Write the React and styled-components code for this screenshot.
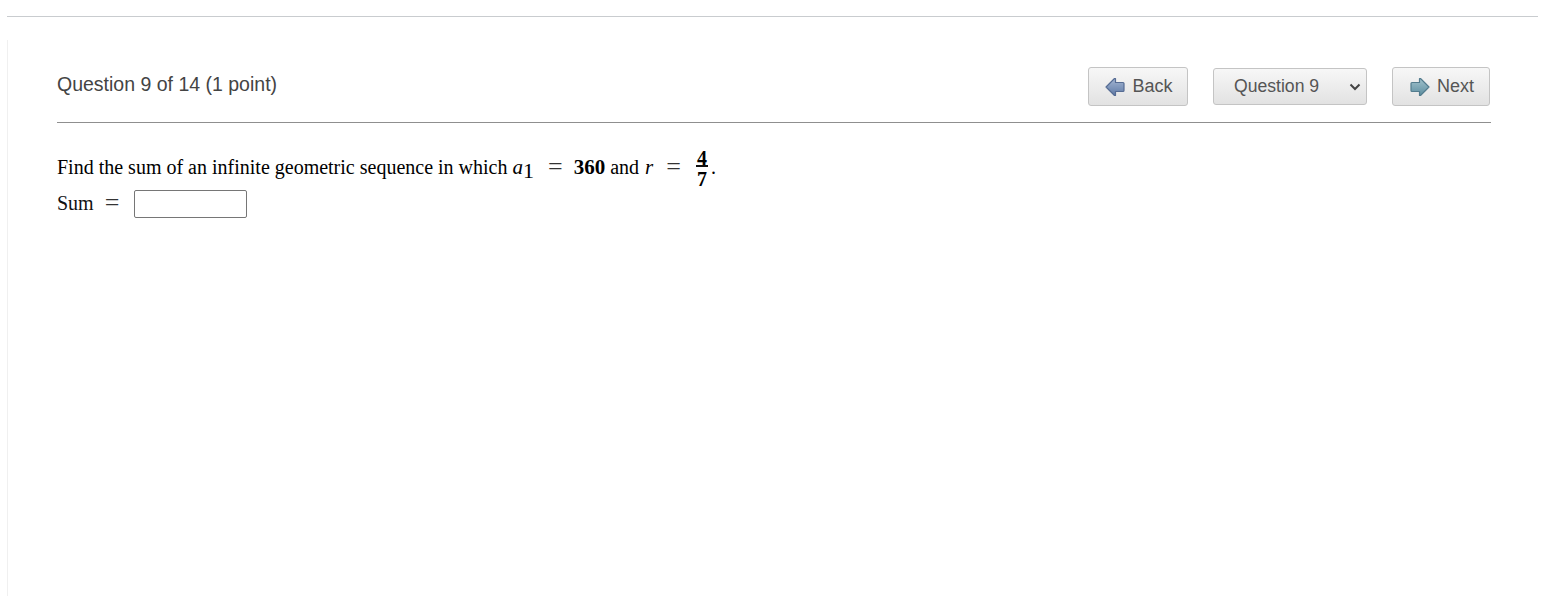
import styled, { createGlobalStyle } from 'styled-components';

const GlobalStyle = createGlobalStyle`
  html, body {
    margin: 0;
    padding: 0;
    background: #fff;
  }
  body {
    font-family: "Liberation Sans", Arial, sans-serif;
    overflow: hidden;
  }
`;

const ArrowIcon = ({ flip, from, to, edge, id }) => (
  <IconSvg $flip={flip} width="20" height="20" viewBox="0 0 20 20">
    <defs>
      <linearGradient id={id} x1="0" y1="0" x2="0" y2="1">
        <stop offset="0" stopColor={from} />
        <stop offset="1" stopColor={to} />
      </linearGradient>
    </defs>
    <path
      d="M1 10 L9.5 1.5 L10.5 1.5 L10.5 5.5 L18 5.5 Q19 5.5 19 6.5 L19 13.5 Q19 14.5 18 14.5 L10.5 14.5 L10.5 18.5 L9.5 18.5 Z"
      fill={`url(#${id})`}
      stroke={edge}
      strokeWidth="1.2"
      strokeLinejoin="round"
    />
  </IconSvg>
);

const App = () => (
  <Page>
    <GlobalStyle />
    <TopRule />
    <Panel>
      <Header>
        <Title>Question 9 of 14 (1 point)</Title>
        <Nav>
          <NavButton $width={100}>
            <ArrowIcon id="back" from="#a3b5d2" to="#5f7aa6" edge="#566c94" />
            Back
          </NavButton>
          <SelectBox>
            <span>Question 9</span>
            <svg width="12" height="8" viewBox="0 0 12 8">
              <path d="M1.5 1.5 L6 6 L10.5 1.5" fill="none" stroke="#444" strokeWidth="2" />
            </svg>
          </SelectBox>
          <NavButton $width={98}>
            <ArrowIcon id="next" flip from="#a2c2cc" to="#5d8ea0" edge="#537c8e" />
            Next
          </NavButton>
        </Nav>
      </Header>
      <Divider />
      <Prompt>
        Find the sum of an infinite geometric sequence in which
        <MathVar $left={5}>a</MathVar>
        <Sub>1</Sub>
        <Equals $left={14} $right={11}>=</Equals>
        <Bold>360</Bold>
        <Word>and</Word>
        <MathVar $left={6}>r</MathVar>
        <Equals $left={13} $right={15}>=</Equals>
        <Fraction>
          <Numerator>4</Numerator>
          <Denominator>7</Denominator>
        </Fraction>
        <Dot>.</Dot>
      </Prompt>
      <AnswerRow>
        <AnswerLabel>
          Sum
          <Equals $left={11} $right={15}>=</Equals>
        </AnswerLabel>
        <AnswerInput type="text" />
      </AnswerRow>
    </Panel>
  </Page>
);

const Page = styled.div`
  height: 596px;
  padding-top: 16px;
  box-sizing: border-box;
  overflow: hidden;
`;

const TopRule = styled.div`
  height: 1px;
  margin: 0 15px 0 7px;
  background: #c9cccf;
`;

const Panel = styled.div`
  margin: 23px 0 0 7px;
  height: 560px;
  padding: 27px 62px 0 49px;
  border-left: 1px solid #f0f0f0;
`;

const Header = styled.div`
  display: flex;
  justify-content: space-between;
  align-items: flex-start;
  height: 55px;
  padding-right: 1px;
`;

const Title = styled.div`
  font-size: 19.5px;
  line-height: 34px;
  color: #444;
`;

const Nav = styled.div`
  display: flex;
  align-items: center;
  gap: 25px;
`;

const NavButton = styled.button`
  display: flex;
  align-items: center;
  justify-content: center;
  gap: 9px;
  box-sizing: border-box;
  width: ${({ $width }) => $width}px;
  height: 39px;
  padding: 0;
  border: 1px solid #c4c4c4;
  border-radius: 3px;
  background: linear-gradient(#f7f7f7, #e2e2e2);
  color: #555;
  font-family: "Liberation Sans", Arial, sans-serif;
  font-size: 18px;
`;

const IconSvg = styled.svg`
  margin: 0 -2px 0 2px;
  transform: ${({ $flip }) => ($flip ? 'scaleX(-1)' : 'none')};
`;

const SelectBox = styled.div`
  display: flex;
  align-items: center;
  justify-content: space-between;
  box-sizing: border-box;
  width: 154px;
  height: 37px;
  padding: 0 5px 0 20px;
  border: 1px solid #c4c4c4;
  border-radius: 3px;
  background: linear-gradient(#f7f7f7, #e2e2e2);
  color: #555;
  font-size: 17.6px;
`;

const Divider = styled.div`
  height: 1px;
  background: #8f8f8f;
`;

const Prompt = styled.div`
  display: flex;
  align-items: center;
  height: 44px;
  margin-top: 22px;
  font-family: "Liberation Serif", "Times New Roman", serif;
  font-size: 20px;
  color: #000;
  white-space: pre;
`;

const MathVar = styled.i`
  margin-left: ${({ $left }) => $left}px;
  font-size: 21px;
`;

const Sub = styled.span`
  position: relative;
  top: 4px;
  font-size: 22px;
`;

const Equals = styled.span`
  margin: 0 ${({ $right }) => $right}px 0 ${({ $left }) => $left}px;
  font-size: 26px;
  line-height: 20px;
  font-weight: 400;
  color: #333;
`;

const Bold = styled.span`
  font-size: 21px;
  font-weight: 700;
`;

const Word = styled.span`
  margin-left: 5px;
`;

const Fraction = styled.span`
  display: inline-flex;
  flex-direction: column;
  align-items: center;
  width: 12px;
  font-size: 20px;
  font-weight: 700;
`;

const Numerator = styled.span`
  display: block;
  width: 100%;
  height: 18px;
  line-height: 23px;
  text-align: center;
  border-bottom: 2px solid #111;
`;

const Denominator = styled.span`
  display: block;
  height: 21px;
  line-height: 24px;
`;

const Dot = styled.span`
  align-self: center;
  margin-left: 3px;
`;

const AnswerRow = styled.div`
  display: flex;
  align-items: center;
  height: 28px;
  margin-top: 1px;
  font-family: "Liberation Serif", "Times New Roman", serif;
  font-size: 20px;
  color: #111;
`;

const AnswerLabel = styled.span`
  display: flex;
  align-items: center;
  padding-bottom: 2px;
`;

const AnswerInput = styled.input`
  box-sizing: border-box;
  width: 113px;
  height: 28px;
  padding: 0;
  border: 1px solid #767676;
  border-radius: 2px;
  background: #fff;
`;

export default App;
